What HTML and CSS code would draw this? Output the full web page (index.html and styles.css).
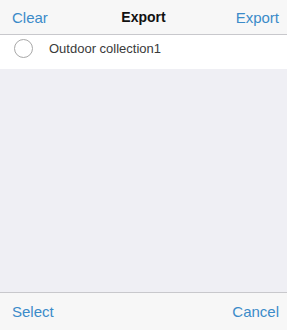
FILE: index.html
```html
<!DOCTYPE html>
<html lang="en">
<head>
    <meta charset="UTF-8">
    <meta name="viewport" content="width=device-width, initial-scale=1.0">
    <title>Export</title>
    <link rel="stylesheet" href="styles.css">
</head>
<body>
    <div class="page">
        <div class="navbar">
            <span class="nav-btn">Clear</span>
            <span class="nav-title">Export</span>
            <span class="nav-btn">Export</span>
        </div>

        <div class="list">
            <div class="row">
                <span class="radio"></span>
                <span class="row-label">Outdoor collection1</span>
            </div>
        </div>

        <div class="toolbar">
            <span class="nav-btn">Select</span>
            <span class="nav-btn">Cancel</span>
        </div>
    </div>
</body>
</html>
```

FILE: styles.css
```css
body {
    margin: 0;
    font-family: "Liberation Sans", Arial, sans-serif;
    background: #efeff4;
}
.page {
    display: flex;
    flex-direction: column;
    height: 330px;
}
.navbar {
    height: 34px;
    display: flex;
    justify-content: space-between;
    align-items: center;
    padding: 0 8px 0 12px;
    background: #f7f7f7;
    border-bottom: 1px solid #c8c8cc;
    position: relative;
}
.nav-btn {
    font-size: 15px;
    color: #3b8bc9;
}
.nav-title {
    position: absolute;
    left: 0;
    right: 0;
    text-align: center;
    font-size: 14px;
    font-weight: bold;
    color: #111;
    pointer-events: none;
}
.list {
    flex: 1;
}
.row {
    height: 34px;
    box-sizing: border-box;
    padding: 0 0 7px 14px;
    display: flex;
    align-items: center;
    background: #fff;
}
.radio {
    width: 17px;
    height: 17px;
    border: 1.5px solid #a8a8a8;
    border-radius: 50%;
    margin-right: 16px;
}
.row-label {
    font-size: 13px;
    color: #3a3a3a;
}
.toolbar {
    height: 37px;
    display: flex;
    justify-content: space-between;
    align-items: center;
    padding: 0 8px 0 12px;
    background: #f7f7f7;
    border-top: 1px solid #c8c8cc;
}
```
